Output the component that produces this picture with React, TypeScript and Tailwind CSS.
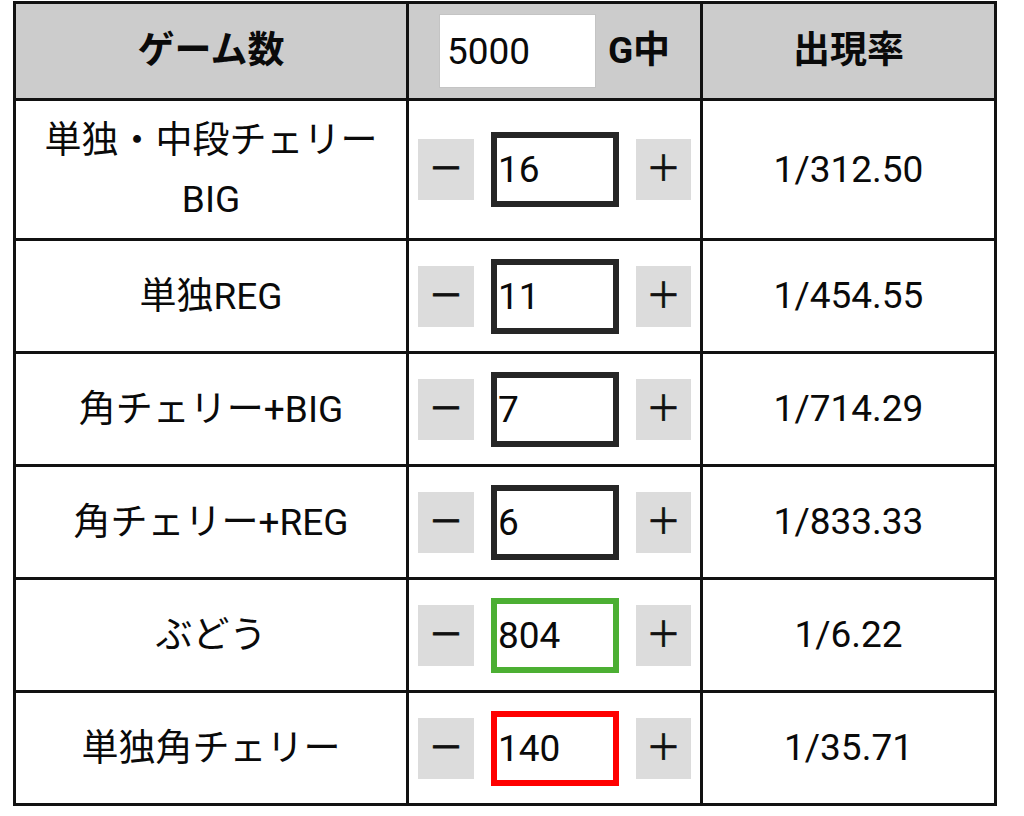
import { useState } from "react";

type Row = {
  label: React.ReactNode;
  count: number;
  tone: "dark" | "green" | "red";
};

const initialRows: Row[] = [
  {
    label: (
      <>
        単独・中段チェリー
        <br />
        BIG
      </>
    ),
    count: 16,
    tone: "dark",
  },
  { label: "単独REG", count: 11, tone: "dark" },
  { label: "角チェリー+BIG", count: 7, tone: "dark" },
  { label: "角チェリー+REG", count: 6, tone: "dark" },
  { label: "ぶどう", count: 804, tone: "green" },
  { label: "単独角チェリー", count: 140, tone: "red" },
];

const toneClass = {
  dark: "border-[#262626]",
  green: "border-[#4caf33]",
  red: "border-[#ff0000]",
};

function Stepper({
  value,
  tone,
  onChange,
}: {
  value: number;
  tone: Row["tone"];
  onChange: (v: number) => void;
}) {
  return (
    <div className="flex items-center gap-[17px]">
      <button
        type="button"
        onClick={() => onChange(Math.max(0, value - 1))}
        className="flex h-[61px] w-[56px] items-center justify-center bg-[#dcdcdc] text-[35px] leading-none text-[#111] [-webkit-text-stroke:0.8px_#111]"
      >
        －
      </button>
      <input
        type="text"
        value={value}
        onChange={(e) => onChange(Number(e.target.value) || 0)}
        className={`h-[75px] w-[128px] border-[6px] bg-white px-px text-[37px] outline-none ${toneClass[tone]}`}
      />
      <button
        type="button"
        onClick={() => onChange(value + 1)}
        className="flex h-[61px] w-[55px] items-center justify-center bg-[#dcdcdc] text-[35px] leading-none text-[#111] [-webkit-text-stroke:0.6px_#111]"
      >
        ＋
      </button>
    </div>
  );
}

export default function App() {
  const [games, setGames] = useState(5000);
  const [counts, setCounts] = useState(initialRows.map((r) => r.count));

  return (
    <div className="min-h-[816px] bg-white pl-[13px] pt-px font-['Roboto','Noto_Sans_CJK_JP',sans-serif] text-[37px] text-[#0a0a0a]">
      <div className="grid w-[984px] grid-cols-[390px_291px_291px] grid-rows-[94px_137px_repeat(5,110px)] gap-[3px] border-[3px] border-[#111] bg-[#111]">
        <div className="flex items-center justify-center bg-[#cccccc] font-bold">ゲーム数</div>
        <div className="flex items-center justify-center gap-[12px] bg-[#cccccc]">
          <input
            type="text"
            value={games}
            onChange={(e) => setGames(Number(e.target.value) || 0)}
            className="h-[74px] w-[157px] border border-[#c4c4c4] bg-white pl-[7px] text-[37px] outline-none"
          />
          <span className="font-bold">G中</span>
        </div>
        <div className="flex items-center justify-center bg-[#cccccc] font-bold">出現率</div>

        {initialRows.map((row, i) => {
          const n = counts[i];
          const rate = n > 0 ? `1/${(games / n).toFixed(2)}` : "-";
          return (
            <div key={i} className="contents">
              <div className="flex items-center justify-center bg-white text-center leading-[59px]">
                <span>{row.label}</span>
              </div>
              <div className="flex items-center justify-center bg-white">
                <Stepper
                  value={n}
                  tone={row.tone}
                  onChange={(v) => setCounts((c) => c.map((x, j) => (j === i ? v : x)))}
                />
              </div>
              <div className="flex items-center justify-center bg-white">{rate}</div>
            </div>
          );
        })}
      </div>
    </div>
  );
}
